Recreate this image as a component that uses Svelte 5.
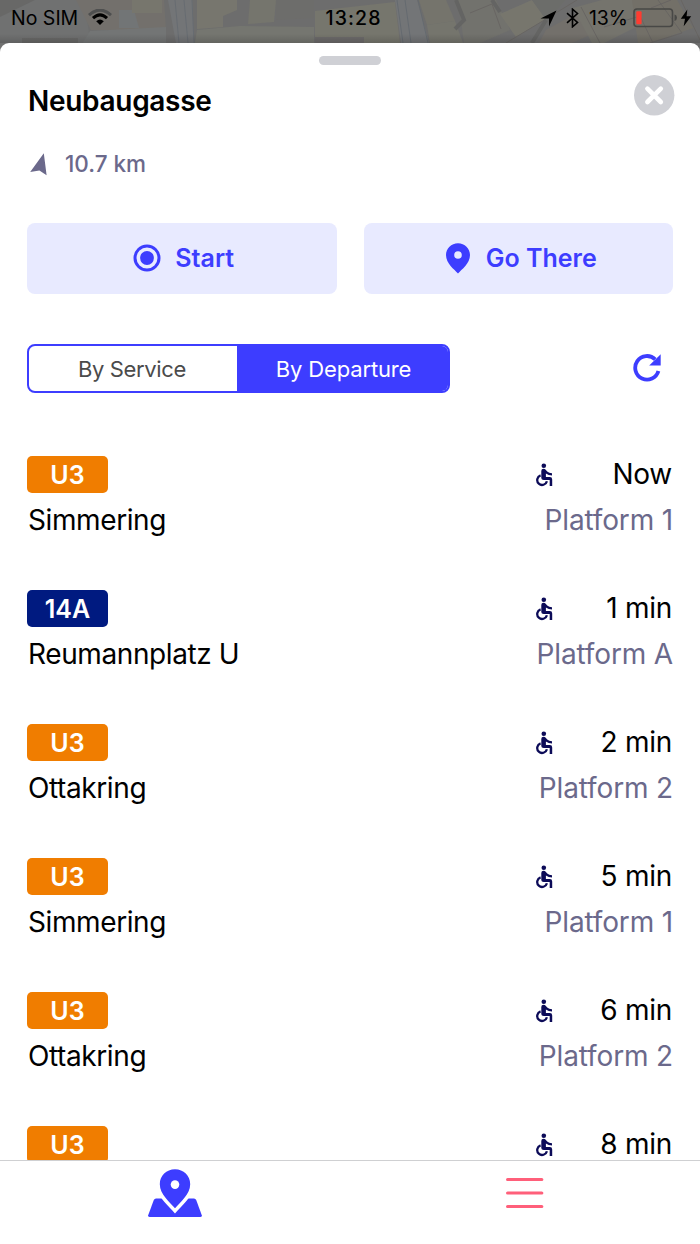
<script>
	let view = $state("departure");

	const departures = [
		{ line: "U3", name: "Simmering", time: "Now", platform: "1" },
		{ line: "14A", name: "Reumannplatz U", time: "1 min", platform: "A", bus: true },
		{ line: "U3", name: "Ottakring", time: "2 min", platform: "2" },
		{ line: "U3", name: "Simmering", time: "5 min", platform: "1" },
		{ line: "U3", name: "Ottakring", time: "6 min", platform: "2" },
		{ line: "U3", time: "8 min" },
	];
</script>

<div class="app">
	<!-- dimmed map behind the sheet -->
	<svg class="map" width="700" height="60" viewBox="0 0 700 60">
		<rect width="700" height="60" fill="#6d6d6c" />
		<path d="M0 0H82L88 26L92 60H0Z" fill="#707272" />
		<path d="M0 0H35L0 17ZM22 38H78V44H22Z" fill="#666665" />
		<path d="M76 0L91 30H166L164 0Z" fill="#74716b" />
		<path d="M119 10H134L139 28H119Z" fill="#737779" />
		<path d="M132 0H162V13H132Z" fill="#7a796d" />
		<path d="M90 31L166 27V44H82Z" fill="#747777" />
		<path d="M197 0H237V10L223 16V27L197 29Z" fill="#7a796e" />
		<path d="M197 30L240 26L314 27V43H195Z" fill="#777970" />
		<path d="M250 0H276L274 22L248 24Z" fill="#77776c" />
		<path d="M276 0H314V18L276 20Z" fill="#6d6c6a" />
		<path d="M315 11L395 2L400 43H315Z" fill="#79786c" />
		<path d="M315 37H364V43H315Z" fill="#6b6968" />
		<path d="M168 0H192L194 43H176Z" fill="#74777a" />
		<path d="M175 0L179 43M184 0L188 43M192 0L194 43" stroke="#656b72" fill="none" />
		<path d="M395 0H417L429 43H401Z" fill="#74777a" />
		<path d="M397 0L403 43M405 0L411 43M418 0L428 43" stroke="#626970" fill="none" />
		<path d="M419 0H446L455 21L427 25Z" fill="#77766b" />
		<path d="M427 25L455 21L463 43H430Z" fill="#77776c" />
		<path d="M458 0H496L510 30L480 43H464Z" fill="#73736c" />
		<path d="M500 14L532 0L546 19L516 37Z" fill="#7a796d" />
		<path d="M532 0H565L556 11L544 17Z" fill="#6b6c69" />
		<path d="M546 30L577 13L592 34L572 43H539Z" fill="#75706a" />
		<path d="M573 8L602 0H632L640 25L604 43H592Z" fill="#77766c" />
		<path d="M632 0H677L693 28L650 43H638Z" fill="#757166" />
		<path d="M470 13L492 4L501 29M506 43L516 37L546 19L577 0M581 7L600 43M604 27L640 16L653 43M658 0L682 33L650 43M651 8L671 0M681 0L700 40" fill="none" stroke="#66625f" />
		<path d="M456 0L464 20L455 29M500 12L492 0M546 20L532 43" fill="none" stroke="#60615f" stroke-width="4" />
		<rect width="700" height="60" fill="#6f6f6e" opacity="0.25" />
	</svg>

	<div class="status">
		<div class="side">
			<span class="carrier">No SIM</span>
			<svg width="24" height="18" viewBox="0 0 24 18">
				<path d="M1 6.2Q12 -4 23 6.2" fill="none" stroke="#4e4f4f" stroke-width="3" />
				<path d="M5 9.2Q12 2.4 19 9.2" fill="none" stroke="#000" stroke-width="3" />
				<path d="M8.2 12.2Q12 9 15.8 12.2L12 16Z" />
			</svg>
		</div>
		<span class="clock">13:28</span>
		<div class="side right">
			<svg class="location" width="17" height="17" viewBox="0 0 17 17">
				<path d="M16.5 .5L9 16.5V8.5H.5Z" />
			</svg>
			<svg class="bluetooth" width="13" height="20" viewBox="0 0 13 20">
				<path d="M1 5.2L11.5 14.5L6.5 18.8V1.2L11.5 5.5L1 14.8" fill="none" stroke="#000" stroke-width="1.6" />
			</svg>
			<span class="percent">13%</span>
			<svg class="battery" width="45" height="20" viewBox="0 0 45 20">
				<rect x="1" y="1" width="38.5" height="17.5" rx="3" fill="none" stroke="#484846" stroke-width="1.6" />
				<rect x="3.3" y="3.3" width="5.3" height="12.9" rx="1" fill="#ff3b30" />
				<path d="M41.5 6.5Q44 7 44 9.8Q44 12.5 41.5 13Z" fill="#484846" />
			</svg>
			<svg width="12" height="18" viewBox="0 0 12 18">
				<path d="M7.3 .5L.8 9.7H5L3.7 17.2L11.2 7.2H6.6Z" />
			</svg>
		</div>
	</div>

	<main class="sheet">
		<div class="handle"></div>
		<header>
			<h1>Neubaugasse</h1>
			<button class="close" aria-label="Close">
				<svg width="41" height="41" viewBox="0 0 41 41">
					<circle cx="20.2" cy="20.3" r="20.2" fill="#cfd0d5" />
					<path d="M13.4 13.6L26.8 27M26.8 13.6L13.4 27" stroke="#fff" stroke-width="4.6" stroke-linecap="round" />
				</svg>
			</button>
		</header>

		<div class="distance">
			<svg width="18" height="23" viewBox="0 0 18 23">
				<path d="M13.8 .3L16.6 22.3L9.4 17.4L.2 18.9Z" />
			</svg>
			<span>10.7 km</span>
		</div>

		<div class="actions">
			<button class="start">
				<svg width="28" height="28" viewBox="0 0 28 28">
					<circle cx="14" cy="14" r="12" fill="none" stroke="currentColor" stroke-width="3" />
					<circle cx="14" cy="14" r="6.9" fill="currentColor" />
				</svg>
				<span>Start</span>
			</button>
			<button class="go">
				<svg width="24" height="31" viewBox="0 0 24 31">
					<path fill="currentColor" fill-rule="evenodd" d="M12 .2C5.3 .2 0 5.4 0 12C0 20.5 8.4 26.5 12 30.5C15.6 26.5 24 20.5 24 12C24 5.4 18.7 .2 12 .2ZM12 8.2A3.8 3.8 0 1 1 12 15.8A3.8 3.8 0 1 1 12 8.2Z" />
				</svg>
				<span>Go There</span>
			</button>
		</div>

		<div class="filter">
			<div class="tabs">
				<button class:active={view == "service"} onclick={() => (view = "service")}><span class="service">By Service</span></button>
				<button class:active={view == "departure"} onclick={() => (view = "departure")}><span class="departure">By Departure</span></button>
			</div>
			<button class="refresh" aria-label="Refresh">
				<svg width="29" height="29" viewBox="0 0 29 29">
					<path d="M22.2 6.3A11.8 11.8 0 1 0 25.4 18" fill="none" stroke="currentColor" stroke-width="3.8" />
					<path d="M27.7 1.2V12.6H16.2Z" fill="currentColor" />
				</svg>
			</button>
		</div>

		<div class="list">
			{#each departures as dep}
				<div class="row">
					<div class="line">
						<span class="badge" class:bus={dep.bus}>{dep.line}</span>
						<svg class="wheelchair" width="17" height="24" viewBox="0 0 17 24">
							<circle cx="7.8" cy="2.7" r="2.3" />
							<path d="M5.3 8Q5.3 5.8 7.6 5.8Q8.8 5.8 9.7 6.8L11.2 8.5Q13 10.1 16 10.3V12.6Q12.5 12.4 9.9 10.4V14H13.8Q16.2 14 16.2 16.4V23H13.7V17H7.7Q5.3 17 5.3 15Z" />
							<path d="M4.6 12.4A4.9 4.9 0 1 0 10.9 18.2" fill="none" stroke="#0c0b58" stroke-width="2.3" />
						</svg>
						<span class="time">{dep.time}</span>
					</div>
					{#if dep.name}
						<div class="line second">
							<span class="name">{dep.name}</span>
							<span class="platform">Platform {dep.platform}</span>
						</div>
					{/if}
				</div>
			{/each}
		</div>
	</main>

	<nav>
		<button aria-label="Map">
			<svg width="56" height="50" viewBox="0 0 56 50">
				<path d="M9 29.5H47Q48.5 29.5 49.2 31L54.8 46.2Q55.2 48 53.5 48H2.5Q.8 48 1.2 46.2L6.8 31Q7.5 29.5 9 29.5Z" fill="#3d3dff" />
				<path d="M28 .3C19.4 .3 12.8 6.8 12.8 15.2C12.8 25.2 23 33.5 28 39.2C33 33.5 43.2 25.2 43.2 15.2C43.2 6.8 36.6 .3 28 .3Z" fill="#3d3dff" stroke="#fff" stroke-width="7" paint-order="stroke" />
				<circle cx="28" cy="15.6" r="4.3" fill="#fff" />
			</svg>
		</button>
		<button class="menu" aria-label="Menu">
			<svg width="38" height="32" viewBox="0 0 38 32">
				<path d="M1.6 2.5H35.8M1.6 16H35.8M1.6 29.5H35.8" stroke="#ff5f7a" stroke-width="3.2" stroke-linecap="round" />
			</svg>
		</button>
	</nav>
</div>

<style>
	:global(body) {
		background: #fff;
		overflow: hidden;
	}

	.app {
		width: 700px;
		height: 1244px;
		display: flex;
		flex-direction: column;
		position: relative;
		overflow: hidden;
		font-family: Inter, "Liberation Sans", sans-serif;
		color: #000;
	}

	.app * {
		box-sizing: border-box;
	}

	svg {
		display: block;
		flex: none;
	}

	span {
		white-space: nowrap;
	}

	button {
		border: 0;
		padding: 0;
		margin: 0;
		background: none;
		font-family: inherit;
		color: #3d3dff;
		display: flex;
		align-items: center;
		justify-content: center;
	}

	.map {
		position: absolute;
		top: 0;
		left: 0;
	}

	.status {
		height: 43px;
		flex: none;
		padding: 0 8px 7px 11px;
		display: grid;
		grid-template-columns: 1fr auto 1fr;
		align-items: center;
		position: relative;
		font-size: 19.5px;
		background: linear-gradient(transparent 34px, rgba(0, 0, 0, 0.15));
	}

	.side {
		display: flex;
		align-items: center;
		gap: 10px;
	}

	.right {
		justify-content: flex-end;
		gap: 0;
	}

	.clock {
		font-weight: 500;
		letter-spacing: 1.1px;
		margin-left: 4px;
	}

	.bluetooth {
		margin: 0 10px 0 9px;
	}

	.battery {
		margin: 0 2px 0 5px;
	}

	.sheet {
		flex: 1;
		min-height: 0;
		overflow: hidden;
		position: relative;
		background: #fff;
		border-radius: 9px 9px 0 0;
		padding: 13px 27px 0;
		display: flex;
		flex-direction: column;
	}

	.handle {
		width: 62px;
		height: 9px;
		flex: none;
		border-radius: 5px;
		background: #cfd0d5;
		align-self: center;
	}

	header {
		display: flex;
		justify-content: space-between;
		height: 41px;
		margin: 10px -2px 0 1px;
		flex: none;
	}

	h1 {
		margin: 9px 0 0;
		font-size: 28px;
		line-height: 35px;
		font-weight: 600;
		letter-spacing: -0.3px;
	}

	.distance {
		display: flex;
		align-items: center;
		gap: 17px;
		height: 30px;
		margin: 33px 0 0 3px;
		flex: none;
		font-size: 22.5px;
		font-weight: 500;
		color: #6b698b;
		fill: #6b698b;
	}

	.distance span {
		padding-bottom: 2px;
	}

	.actions {
		display: grid;
		grid-template-columns: 1fr 1fr;
		gap: 27px;
		margin-top: 44px;
		flex: none;
	}

	.actions button {
		height: 71px;
		padding: 0 0 1px 4px;
		border-radius: 8px;
		background: #e8eaff;
		font-size: 25px;
		font-weight: 600;
		gap: 14px;
	}

	.actions .go {
		gap: 16px;
		padding-left: 6px;
	}

	.filter {
		display: flex;
		justify-content: space-between;
		align-items: center;
		margin-top: 50px;
		flex: none;
	}

	.tabs {
		width: 423px;
		height: 49px;
		display: grid;
		grid-template-columns: 208px 1fr;
		border: 2px solid #3d3dff;
		border-radius: 8px;
		overflow: hidden;
	}

	.tabs button {
		font-size: 22px;
		color: #4b4b4b;
	}

	.tabs .active {
		background: #3d3dff;
		color: #fff;
	}

	.service {
		letter-spacing: -0.35px;
		margin-right: 2px;
	}

	.departure {
		letter-spacing: -0.15px;
		margin-left: 2px;
	}

	.refresh {
		margin: 0 11px 2px 0;
	}

	.list {
		margin-top: 63px;
		flex: none;
	}

	.row {
		height: 134px;
	}

	.line {
		height: 37px;
		display: flex;
		align-items: center;
		font-size: 28px;
	}

	.second {
		height: 53px;
		justify-content: space-between;
	}

	.badge {
		width: 81px;
		height: 37px;
		margin-right: auto;
		border-radius: 5px;
		background: #f07d00;
		color: #fff;
		font-size: 25px;
		font-weight: 600;
		line-height: 38px;
		text-align: center;
	}

	.bus {
		background: #001a80;
	}

	.wheelchair {
		fill: #0c0b58;
	}

	.time {
		width: 120px;
		padding: 0 1px 2px 0;
		text-align: right;
		letter-spacing: -0.25px;
	}

	.name {
		letter-spacing: -0.4px;
		padding-left: 1px;
	}

	.platform {
		color: #6b698b;
		letter-spacing: -0.15px;
	}

	nav {
		height: 84px;
		flex: none;
		position: relative;
		display: grid;
		grid-template-columns: 1fr 1fr;
		border-top: 1px solid #cfd0d2;
		background: #fff;
	}

	nav button {
		height: 65px;
	}

	nav .menu {
		height: 63px;
	}
</style>
